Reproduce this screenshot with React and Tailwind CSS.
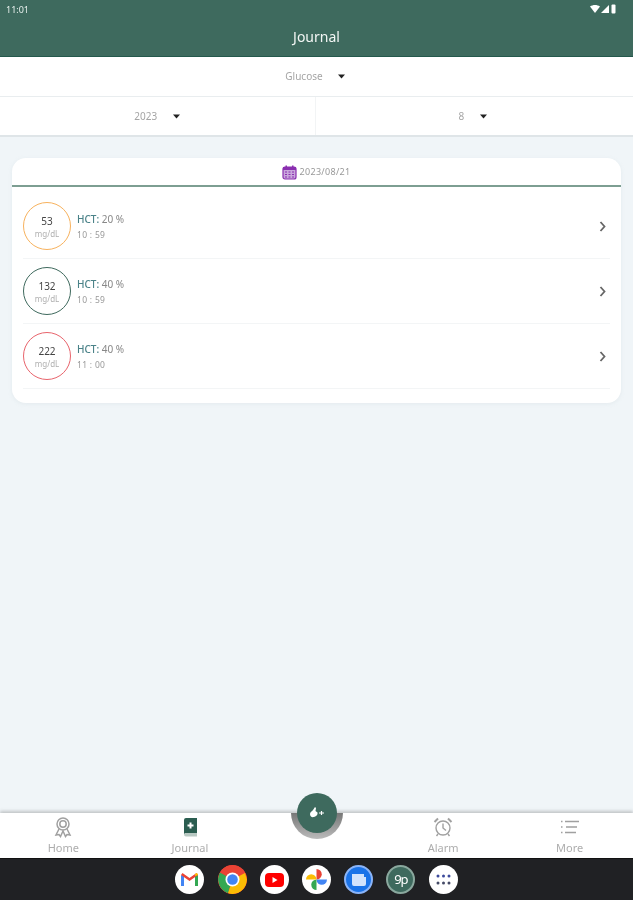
import React from "react";

const font = { fontFamily: '"Noto Sans", "Open Sans", sans-serif' };

function Caret() {
  return (
    <svg width="7" height="5" viewBox="0 0 7 5" className="block">
      <path d="M0 .5h7L3.500 4.500z" fill="#222" />
    </svg>
  );
}

function Row({ value, ring, hct, time }) {
  return (
    <div className="h-[65px] mx-[11px] border-b border-[#f3f5f6] flex items-center">
      <div
        className="w-[48px] h-[48px] rounded-full border-[1.5px] flex flex-col items-center justify-center bg-white shrink-0 pt-[1px]"
        style={{ borderColor: ring }}
      >
        <span className="text-[10px] leading-[13px] text-[#444]">{value}</span>
        <span className="text-[8px] leading-[11px] text-[#b0b0b0]">mg/dL</span>
      </div>
      <div className="ml-[6px] flex flex-col gap-[4px] flex-1">
        <div className="text-[10px] leading-[12px] text-[#888] mt-[1px]">
          <span className="text-[#4a8288] font-medium">HCT:</span> {hct} %
        </div>
        <div className="text-[8.5px] leading-[11px] text-[#999] tracking-[0.3px]">{time}</div>
      </div>
      <svg width="8" height="11" viewBox="0 0 8 11" className="mr-[3px]" fill="none">
        <path d="M1.500 1l4 4.500-4 4.500" stroke="#666" strokeWidth="1.800" />
      </svg>
    </div>
  );
}

function NavItem({ label, children }) {
  return (
    <div className="flex-1 flex flex-col items-center pt-[3px]">
      <div className="h-[22px] flex items-center justify-center">{children}</div>
      <span className="text-[11px] leading-[14px] mt-[3px] text-[#adadad]">{label}</span>
    </div>
  );
}

function Dock({ children, bg = "bg-white", ring = "" }) {
  return (
    <div className={`w-[29px] h-[29px] rounded-full flex items-center justify-center overflow-hidden ${bg} ${ring}`}>
      {children}
    </div>
  );
}

export default function App() {
  return (
    <div className="w-[633px] h-[900px] flex flex-col bg-[#f0f5f8] overflow-hidden relative blur-[0.4px]" style={font}>
      {/* header */}
      <div className="h-[57px] bg-[#3e6a5e] border-b-[1.5px] border-[#24584c] shrink-0 flex flex-col">
        <div className="h-[18px] flex items-center justify-between pl-[6px] pr-[16px]">
          <span className="text-[9px] text-[#e8f0ed] leading-none">11:01</span>
          <div className="flex items-center gap-[1px]">
            <svg width="10" height="8" viewBox="0 0 10 8"><path d="M0 1.500C3 -.5 7 -.5 10 1.500L5 8z" fill="#fff" /></svg>
            <svg width="8" height="8" viewBox="0 0 8 8"><path d="M8 0v8H0z" fill="#fff" /></svg>
            <svg width="7" height="10" viewBox="0 0 7 10"><rect x="1.500" y="0.500" width="4" height="9" rx="1" fill="#fff" /></svg>
          </div>
        </div>
        <div className="text-center text-[14px] leading-[20px] mt-[9px] text-[#f2f6f4]">Journal</div>
      </div>

      {/* selectors */}
      <div className="h-[40px] bg-white border-b border-[#e9edef] flex items-center justify-center gap-[15px] shrink-0 pr-[3px]">
        <span className="text-[10px] text-[#a5a5a5]">Glucose</span>
        <Caret />
      </div>
      <div className="h-[40px] bg-white border-b-2 border-[#dfe5e8] flex shrink-0">
        <div className="flex-1 flex items-center justify-center gap-[16px] border-r border-[#f2f4f5]">
          <span className="text-[10px] text-[#a5a5a5]">2023</span>
          <Caret />
        </div>
        <div className="flex-1 flex items-center justify-center gap-[16px] pr-[3px]">
          <span className="text-[10px] text-[#a5a5a5]">8</span>
          <Caret />
        </div>
      </div>

      {/* card */}
      <div className="flex-1 px-[12px] pt-[21px]">
        <div className="bg-white rounded-[14px] pb-[14px] shadow-[0_1px_4px_rgba(160,180,190,0.15)]">
          <div className="h-[29px] border-b-2 border-[#7d9e92] flex items-center justify-center gap-[3px] pt-[1px] pr-[1px]">
            <svg width="15" height="15" viewBox="0 0 15 15">
              <rect x="1" y="2" width="13" height="12" rx="2" fill="#c9a7dc" stroke="#8a2fb0" strokeWidth="1.200" />
              <rect x="1" y="2" width="13" height="3" fill="#8a2fb0" />
              <rect x="3.500" y="0.500" width="1.500" height="3" fill="#8a2fb0" />
              <rect x="10" y="0.500" width="1.500" height="3" fill="#8a2fb0" />
              <path d="M3 7h2M6.500 7h2M10 7h2M3 9.500h2M6.500 9.500h2M10 9.500h2M3 12h2M6.500 12h2M10 12h2" stroke="#8a2fb0" strokeWidth="1.200" />
            </svg>
            <span className="text-[9px] text-[#999] tracking-[0.3px]">2023/08/21</span>
          </div>
          <div className="pt-[7px]">
            <Row value="53" ring="#f7b25e" hct="20" time="10 : 59" />
            <Row value="132" ring="#3f6a5e" hct="40" time="10 : 59" />
            <Row value="222" ring="#e8646c" hct="40" time="11 : 00" />
          </div>
        </div>
      </div>

      {/* bottom nav */}
      <div className="h-[45px] bg-white shrink-0 flex shadow-[0_-2px_3px_rgba(110,110,110,0.35)]">
        <NavItem label="Home">
          <svg width="18" height="21" viewBox="0 0 18 21" fill="none" stroke="#a0a0a0" strokeWidth="1.500">
            <circle cx="9" cy="7" r="6" />
            <circle cx="9" cy="7" r="3.200" />
            <path d="M5 12l-3 6 3-.5 1.500 2L9 14l2.500 5.500 1.500-2 3 .5-3-6" />
          </svg>
        </NavItem>
        <NavItem label="Journal">
          <svg width="14" height="19" viewBox="0 0 14 19">
            <path d="M1 2a2 2 0 012-2h11v15H3a2 2 0 00-2 1.500z" fill="#2b5d50" />
            <path d="M1 16.500A2 2 0 013 15h11v3.500H3a2 2 0 01-2-2z" fill="#b8c8c2" />
            <path d="M6.500 4.500h2v2h2v2h-2v2h-2v-2h-2v-2h2z" fill="#fff" />
          </svg>
        </NavItem>
        <div className="flex-1" />
        <NavItem label="Alarm">
          <svg width="20" height="20" viewBox="0 0 20 20" fill="none" stroke="#a0a0a0" strokeWidth="1.400">
            <circle cx="10" cy="11" r="7" />
            <path d="M10 6.500V11l3 2.500" />
            <path d="M1.500 5L5 1.500M18.500 5L15 1.500" strokeWidth="2" />
            <path d="M5 17l-1.500 2M15 17l1.500 2" />
          </svg>
        </NavItem>
        <NavItem label="More">
          <svg width="18" height="14" viewBox="0 0 18 14" fill="none" stroke="#a0a0a0" strokeWidth="1.400">
            <path d="M4 1.500h14M5 7h11M4 12.500h11" />
            <path d="M0 1.500h1.500M0 7h1.500M0 12.500h1.500" />
          </svg>
        </NavItem>
      </div>

      {/* android dock */}
      <div className="h-[42px] bg-[#202124] border-t border-[#111] shrink-0 flex items-center justify-center gap-[13.200px]">
        <Dock>
          <svg width="19" height="15" viewBox="0 0 19 15">
            <path d="M1 14V3l3 1v10z" fill="#4285f4" />
            <path d="M15 14V4l3-1v11z" fill="#34a853" />
            <path d="M1 3l8.500 6L18 3l-1.500-2-7 5-7-5z" fill="#ea4335" />
            <path d="M15 4l3-1V2l-1.500-1L15 2z" fill="#fbbc04" />
          </svg>
        </Dock>
        <Dock bg="bg-[#ea4335]">
          <svg width="29" height="29" viewBox="0 0 29 29">
            <circle cx="14.500" cy="14.500" r="14.500" fill="#ea4335" />
            <path d="M14.500 14.500L1.900 7.500A14.500 14.500 0 0 0 10 28.300z" fill="#34a853" />
            <path d="M14.500 14.500L10 28.300A14.500 14.500 0 0 0 29 14.500L27 8z" fill="#fbbc04" />
            <circle cx="14.500" cy="14.500" r="7" fill="#fff" />
            <circle cx="14.500" cy="14.500" r="5.300" fill="#4285f4" />
          </svg>
        </Dock>
        <Dock>
          <svg width="19" height="14" viewBox="0 0 19 14">
            <rect width="19" height="14" rx="4" fill="#f00" />
            <path d="M7.500 4l5 3-5 3z" fill="#fff" />
          </svg>
        </Dock>
        <Dock>
          <svg width="21" height="21" viewBox="0 0 21 21">
            <path d="M10.500 10.500V0a5.250 5.250 0 010 10.500z" fill="#ea4335" />
            <path d="M10.500 10.500H21a5.250 5.250 0 01-10.500 0z" fill="#4285f4" />
            <path d="M10.500 10.500V21a5.250 5.250 0 010-10.500z" fill="#34a853" />
            <path d="M10.500 10.500H0a5.250 5.250 0 0110.500 0z" fill="#fbbc04" />
          </svg>
        </Dock>
        <Dock bg="bg-[#1a73e8]" ring="border-2 border-[#8ab4f8]">
          <svg width="14" height="12" viewBox="0 0 14 12">
            <path d="M0 0h12v3h2v7a2 2 0 01-2 2H2a2 2 0 01-2-2z" fill="#d2e3fc" />
          </svg>
        </Dock>
        <Dock bg="bg-[#3e6a5e]" ring="border-2 border-[#8aa89e]">
          <span className="text-[13px] leading-none text-white tracking-[-1px]">9p</span>
        </Dock>
        <Dock>
          <svg width="15" height="11" viewBox="0 0 15 11">
            <g fill="#3c4a9c">
              <circle cx="2" cy="2" r="1.500" /><circle cx="7.500" cy="2" r="1.500" /><circle cx="13" cy="2" r="1.500" />
            </g>
            <g fill="#444a66">
              <circle cx="2" cy="9" r="1.500" /><circle cx="7.500" cy="9" r="1.500" /><circle cx="13" cy="9" r="1.500" />
            </g>
          </svg>
        </Dock>
      </div>

      {/* floating action button with the notch shadow below it */}
      <div className="absolute left-[291px] top-[813px] w-[52px] h-[26px] rounded-b-full bg-gradient-to-b from-[#777] to-[#bbb]" />
      <div className="absolute left-[297px] top-[793px] w-[40px] h-[40px] rounded-full bg-[#3e6a5e] flex items-center justify-center">
        <svg width="16" height="14" viewBox="0 0 16 14">
          <path d="M1 8c0-2 2-2.500 3-4l2-3 1 1-.5 3 2 1.500c.5 2-1 4-3.500 4.500S1 10.500 1 8z" fill="#fff" />
          <path d="M10 7h5M12.500 5v4" stroke="#fff" strokeWidth="1.200" />
        </svg>
      </div>
    </div>
  );
}
